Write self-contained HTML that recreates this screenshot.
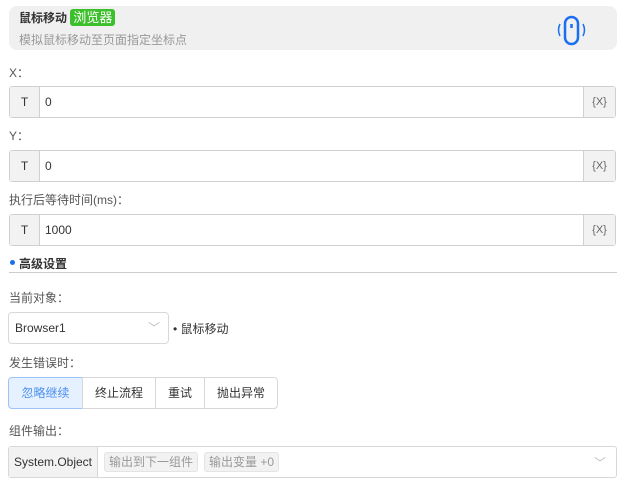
<!DOCTYPE html><html><head><style>
body{margin:0;width:630px;height:484px;background:#fff;font-family:"Liberation Sans","Noto Sans CJK SC",sans-serif;font-size:12px;color:#333;position:relative;overflow:hidden}
.a{position:absolute}
.hdr{left:9px;top:6px;width:608px;height:44px;background:#f0f0f0;border-radius:8px}
.lbl{left:9px;color:#555;font-size:12px}
.inp{left:9px;width:607px;height:32px;border:1px solid #d0d0d0;border-radius:3px;box-sizing:border-box;display:flex}
.inp .t{width:29px;background:#f2f2f2;border-right:1px solid #d0d0d0;text-align:center;line-height:30px}
.inp .v{flex:1;padding-left:5px;line-height:30px}
.inp .x{width:31px;background:#f2f2f2;border-left:1px solid #d0d0d0;text-align:center;line-height:30px;font-size:11px;color:#666}
.btn{top:377px;height:32px;border:1px solid #d8d8d8;box-sizing:border-box;line-height:30px;text-align:center}
.tag{background:#f2f2f2;border:1px solid #e4e4e4;border-radius:3px;color:#999;padding:0 4px;height:18px;line-height:18px;margin-left:6px;font-size:12px}
</style></head><body>
<div class="a hdr"></div>
<div class="a" style="left:19px;top:10px;font-weight:bold;font-size:12px;line-height:16px">鼠标移动 <span style="background:#3bbf2a;color:#fff;border-radius:3px;padding:1px 3px;font-weight:normal;font-size:13px">浏览器</span></div>
<div class="a" style="left:19px;top:31px;color:#999">模拟鼠标移动至页面指定坐标点</div>
<svg class="a" style="left:556px;top:14px" width="32" height="34" viewBox="0 0 32 34"><rect x="9" y="3" width="13" height="27" rx="6.5" fill="none" stroke="#1a6ff0" stroke-width="2.5"/><line x1="15.5" y1="10" x2="15.5" y2="14" stroke="#1a6ff0" stroke-width="2.5"/><path d="M4 10 Q1 16 4 22 M27 10 Q30 16 27 22" fill="none" stroke="#1a6ff0" stroke-width="1.5"/></svg>
<div class="a lbl" style="top:64px">X：</div>
<div class="a inp" style="top:86px"><div class="t">T</div><div class="v">0</div><div class="x">{X}</div></div>
<div class="a lbl" style="top:127px">Y：</div>
<div class="a inp" style="top:150px"><div class="t">T</div><div class="v">0</div><div class="x">{X}</div></div>
<div class="a lbl" style="top:191px">执行后等待时间(ms)：</div>
<div class="a inp" style="top:214px"><div class="t">T</div><div class="v">1000</div><div class="x">{X}</div></div>
<div class="a" style="left:10px;top:260px;width:5px;height:5px;border-radius:50%;background:#1a6ff0"></div>
<div class="a" style="left:19px;top:255px;font-weight:bold">高级设置</div>
<div class="a" style="left:9px;top:272px;width:608px;height:1px;background:#ccc"></div>
<div class="a lbl" style="top:289px">当前对象：</div>
<div class="a" style="left:8px;top:312px;width:161px;height:32px;border:1px solid #d8d8d8;border-radius:4px;box-sizing:border-box;line-height:30px;padding-left:6px">Browser1<span style="position:absolute;right:8px;top:0;color:#bbb">﹀</span></div>
<div class="a" style="left:173px;top:320px">•&nbsp;鼠标移动</div>
<div class="a lbl" style="top:354px">发生错误时：</div>
<div class="a btn" style="left:8px;width:75px;background:#e6f1ff;border-color:#9cc3f5;color:#4a8ff0;border-radius:4px 0 0 4px">忽略继续</div>
<div class="a btn" style="left:82px;width:74px">终止流程</div>
<div class="a btn" style="left:155px;width:50px">重试</div>
<div class="a btn" style="left:204px;width:74px;border-radius:0 4px 4px 0">抛出异常</div>
<div class="a lbl" style="top:422px">组件输出：</div>
<div class="a" style="left:8px;top:446px;width:609px;height:32px;border:1px solid #d8d8d8;border-radius:3px;box-sizing:border-box;display:flex;align-items:center">
<div style="width:88px;height:30px;background:#f2f2f2;border-right:1px solid #d8d8d8;line-height:30px;text-align:center">System.Object</div>
<span class="tag">输出到下一组件</span><span class="tag">输出变量 +0</span>
<span style="margin-left:auto;margin-right:10px;color:#bbb">﹀</span></div>
</body></html>
